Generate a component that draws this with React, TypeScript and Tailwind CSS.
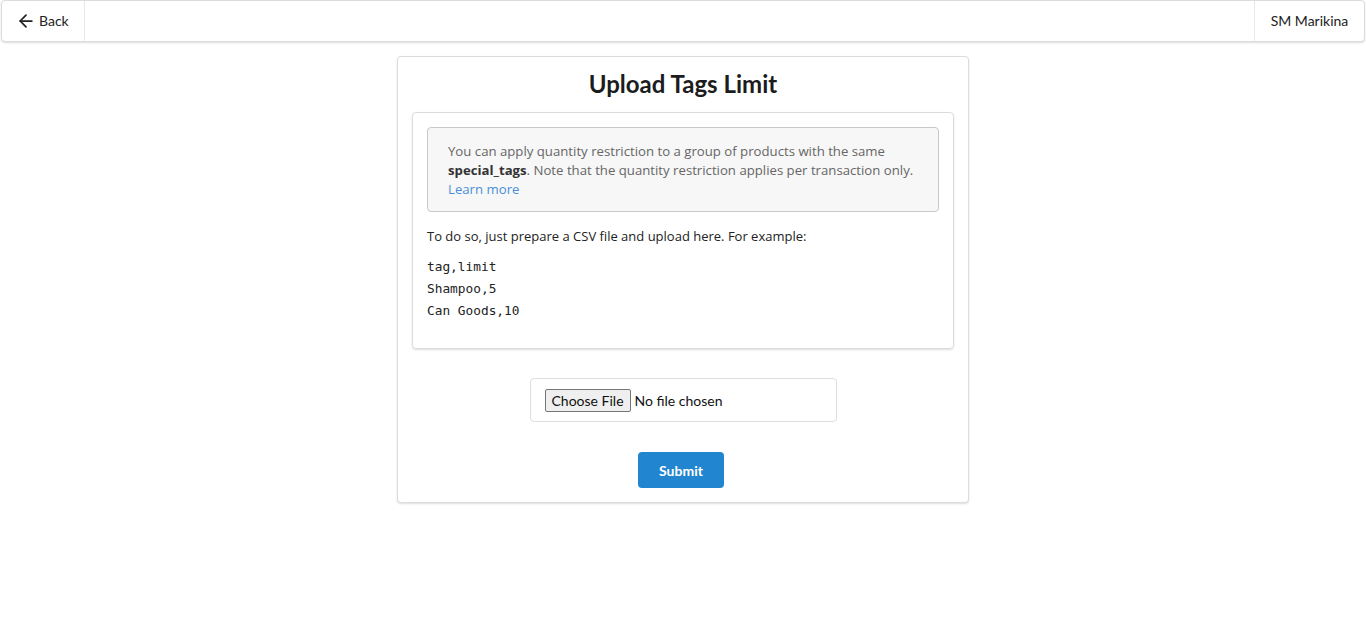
import { ArrowLeft } from "lucide-react";

const lato = "font-['Lato','Liberation_Sans',sans-serif]";

const Header = () => {
  return (
    <div className={`mx-px flex h-[42px] items-stretch justify-between rounded border border-[#dcdcde] bg-white text-sm text-[#222] shadow-[0_1px_2px_rgba(34,36,38,0.15)] ${lato}`}>
      {/* Back */}
      <a href="#" className="flex w-[83px] items-center gap-[3px] border-r border-[#e8e8e9] pl-[14px]">
        <ArrowLeft className="h-[20px] w-[20px]" strokeWidth={2.1} />
        <span>Back</span>
      </a>
      {/* Store name */}
      <div className="flex w-[110px] items-center justify-center border-l border-[#e8e8e9]">SM Marikina</div>
    </div>
  );
};

const App = () => {
  return (
    <div className={`min-h-[625px] bg-white ${lato}`}>
      <Header />

      <div className="flex justify-center pt-[14px]">
        <div className="w-[572px] rounded border border-[#dcdcde] bg-white px-[14px] pb-[14px] pt-[10px] shadow-[0_1px_2px_rgba(34,36,38,0.15)]">
          <h1 className="text-center text-[24px] font-bold leading-[34px] text-[#1b1c1d]">Upload Tags Limit</h1>

          {/* Instructions */}
          <div className="mt-[11px] rounded border border-[#dcdcde] p-[14px] shadow-[0_1px_2px_rgba(34,36,38,0.15)] font-['Open_Sans','Noto_Sans',sans-serif] text-[13px]">
            <div className="rounded border border-[#c8c8c8] bg-[#f7f7f7] px-[20px] pb-[12px] pt-[14px] text-[13.2px] leading-[19px] text-[#666]">
              You can apply quantity restriction to a group of products with the same{" "}
              <b className="text-[#333]">special_tags</b>. Note that the quantity restriction applies per transaction only.
              <br />
              <a href="#" className="text-[#4a90d9]">Learn more</a>
            </div>
            <p className="mt-[15px] leading-[19px] text-[#222]">To do so, just prepare a CSV file and upload here. For example:</p>
            <pre className="mt-[10px] mb-[12px] font-['DejaVu_Sans_Mono','Liberation_Mono',monospace] text-[12.8px] leading-[22px] text-[#222]">
              {"tag,limit\nShampoo,5\nCan Goods,10"}
            </pre>
          </div>

          {/* Upload */}
          <div className="mt-[29px] flex justify-center">
            <div className="flex h-[44px] w-[307px] items-center rounded border border-[#dedede] px-[14px]">
              <input type="file" className="text-[14px] text-[#111] file:mr-[4px] file:rounded-[2px] file:border file:border-[#767676] file:bg-[#efefef] file:px-[6px] file:py-0 file:text-[14px] file:text-[#111]" />
            </div>
          </div>

          <div className="mt-[30px] flex justify-center">
            <button className="mr-[4px] h-[36px] w-[86px] rounded bg-[#2185d0] text-[14px] font-bold text-white">Submit</button>
          </div>
        </div>
      </div>
    </div>
  );
};

export default App;
